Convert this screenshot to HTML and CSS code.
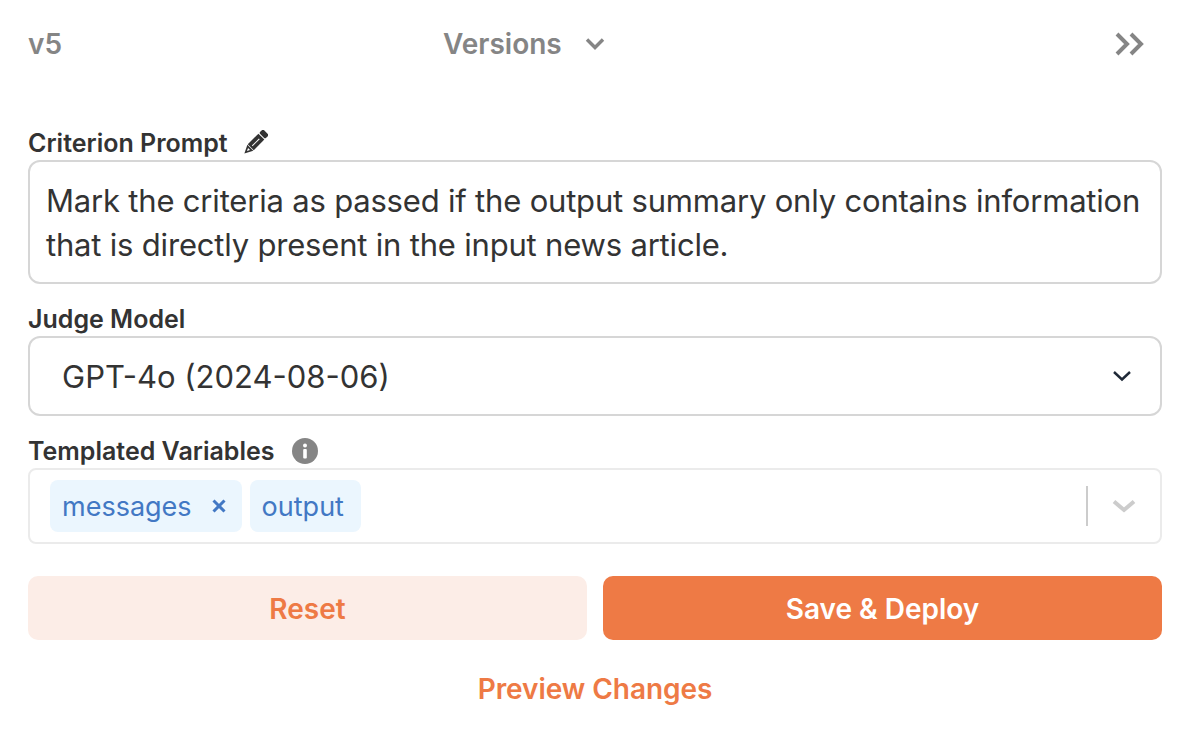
FILE: index.html
```html
<!DOCTYPE html>
<html lang="en">

<head>
    <meta charset="UTF-8">
    <title>Criterion Versions</title>
    <link rel="stylesheet" href="styles.css">
</head>

<body>
    <main class="panel">
        <!-- Header -->
        <div class="header">
            <span class="version">v5</span>
            <button class="versions">
                Versions
                <svg width="22" height="14" viewBox="0 0 22 14" fill="none" stroke="#858585" stroke-width="3.4"><path d="M3 2.5 11 10.5 19 2.5"/></svg>
            </button>
            <svg class="collapse" width="32" height="26" viewBox="0 0 32 26" fill="none" stroke="#858585" stroke-width="4"><path d="M3 3 13 13 3 23"/><path d="M17 3 27 13 17 23"/></svg>
        </div>

        <!-- Form -->
        <div class="label label-prompt">
            Criterion Prompt
            <svg width="26" height="26" viewBox="0 0 26 26"><g transform="rotate(45 13 13)"><rect x="8.8" y="-2.5" width="8.4" height="5.5" rx="1.6" fill="#333"/><rect x="8.8" y="4" width="8.4" height="15" fill="#333"/><rect x="12.6" y="7" width="1" height="10" fill="#fff"/><path d="M8.8 19.6h8.4L13 28z" fill="#333"/><path d="M11.6 21.4h2.8L13 24.4z" fill="#fff"/></g></svg>
        </div>
        <div class="prompt">Mark the criteria as passed if the output summary only contains information that is directly present in the input news article.</div>

        <div class="label label-model">Judge Model</div>
        <div class="model">
            <span>GPT-4o (2024-08-06)</span>
            <svg width="20" height="12" viewBox="0 0 20 12" fill="none" stroke="#1f2937" stroke-width="2.4"><path d="M2 2 10 9.5 18 2"/></svg>
        </div>

        <div class="label label-vars">
            Templated Variables
            <svg width="26" height="26" viewBox="0 0 26 26"><circle cx="13" cy="13" r="13" fill="#858585"/><circle cx="13" cy="7.6" r="2" fill="#fff"/><rect x="11.2" y="11" width="3.6" height="9.5" rx="1" fill="#fff"/></svg>
        </div>
        <div class="vars">
            <div class="tags">
                <span class="tag">messages <svg width="14" height="14" viewBox="0 0 14 14" stroke="#4278c4" stroke-width="3"><path d="M1.5 1.5 12.5 12.5M12.5 1.5 1.5 12.5"/></svg></span>
                <span class="tag">output</span>
            </div>
            <span class="divider"></span>
            <svg class="vars-arrow" width="24" height="14" viewBox="0 0 24 14" fill="none" stroke="#cccccc" stroke-width="4"><path d="M2 2.5 12 11 22 2.5"/></svg>
        </div>

        <div class="actions">
            <button class="btn resetBtn">Reset</button>
            <button class="btn saveBtn">Save &amp; Deploy</button>
        </div>
        <button class="preview">Preview Changes</button>
    </main>
</body>

</html>
```

FILE: styles.css
```css
* {
    box-sizing: border-box;
    padding: 0;
    margin: 0;
}

body {
    background: #fff;
    color: #333;
    font-family: 'Inter', sans-serif;
}

button {
    border: none;
    background: none;
    font-family: inherit;
    cursor: pointer;
}

.panel {
    width: 1192px;
    height: 738px;
    padding: 0 30px 0 28px;
    overflow: hidden;
}

/* Header */
.header {
    display: flex;
    align-items: center;
    height: 88px;
}

.version,
.versions {
    color: #858585;
    font-size: 28px;
    font-weight: 600;
}

.versions {
    display: flex;
    align-items: center;
    gap: 22px;
    margin-left: 381px;
}

.collapse {
    margin-left: auto;
    margin-right: 16px;
}

/* Labels */
.label {
    display: flex;
    align-items: center;
    font-size: 25px;
    font-weight: 600;
    line-height: 32px;
}

.label-prompt {
    gap: 14px;
    margin-top: 39px;
    margin-bottom: 1px;
}

.label-model {
    margin-top: 19px;
    margin-bottom: 1px;
}

.label-vars {
    gap: 18px;
    margin-top: 19px;
    margin-bottom: 1px;
}

/* Fields */
.prompt {
    height: 124px;
    padding: 17px 16px;
    border: 2px solid #d6d6d6;
    border-radius: 12px;
    font-size: 31px;
    letter-spacing: -0.19px;
    line-height: 44px;
}

.model {
    display: flex;
    align-items: center;
    justify-content: space-between;
    height: 80px;
    padding: 0 28px 0 32px;
    border: 2px solid #d6d6d6;
    border-radius: 12px;
    font-size: 31px;
}

.vars {
    display: flex;
    align-items: center;
    height: 76px;
    padding: 0 24px 0 20px;
    border: 2px solid #ebebeb;
    border-radius: 8px;
}

.tags {
    display: flex;
    flex: 1;
    gap: 8px;
}

.tag {
    display: flex;
    align-items: center;
    gap: 20px;
    height: 52px;
    padding: 0 16px 0 12px;
    background: #ebf6fe;
    border-radius: 8px;
    color: #4278c4;
    font-size: 27px;
}

.tag:last-child {
    padding-right: 17px;
}

.divider {
    width: 2px;
    height: 40px;
    margin-right: 24px;
    background: #cccccc;
}

/* Button Styling */
.actions {
    display: flex;
    gap: 16px;
    margin-top: 32px;
}

.btn {
    flex: 1;
    height: 64px;
    padding-top: 1px;
    border-radius: 10px;
    font-size: 28px;
    font-weight: 580;
}

.resetBtn {
    background: #fcede7;
    color: #ee7a45;
}

.saveBtn {
    background: #ee7a45;
    color: #fff;
}

.preview {
    display: block;
    margin: 32px auto 0;
    color: #ee7a45;
    font-size: 28px;
    font-weight: 580;
    letter-spacing: -0.05px;
}
```
